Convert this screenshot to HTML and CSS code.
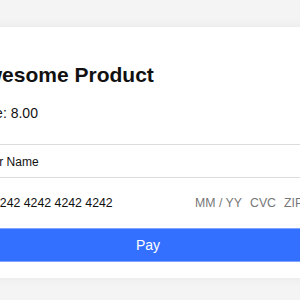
FILE: index.html
```html
<!DOCTYPE html>
<html lang="en">
<head>
    <meta charset="UTF-8">
    <meta name="viewport" content="width=device-width, initial-scale=1.0">
    <title>Checkout</title>
    <link rel="stylesheet" href="styles.css">
</head>
<body>
    <div class="page">
        <div class="card">
            <h2 class="title">Awesome Product</h2>
            <p class="price">Price: 8.00</p>
            <form class="pay-form">
                <div class="field name-field">
                    <span class="value">Your Name</span>
                </div>
                <div class="field card-field">
                    <svg class="brand" width="14" height="10" viewBox="0 0 14 10">
                        <rect x="0.5" y="0.5" width="13" height="9" rx="1.5" fill="none" stroke="#999"/>
                        <rect x="0.5" y="2.5" width="13" height="2" fill="#999"/>
                    </svg>
                    <span class="value number">4242 4242 4242 4242</span>
                    <span class="placeholder exp">MM / YY</span>
                    <span class="placeholder cvc">CVC</span>
                    <span class="placeholder zip">ZIP</span>
                </div>
                <button type="button" class="pay">Pay</button>
            </form>
        </div>
    </div>
</body>
</html>
```
FILE: styles.css
```css
html, body {
    margin: 0;
    height: 100%;
    overflow: hidden;
    background: #f4f4f4;
    font-family: "Liberation Sans", Arial, sans-serif;
    color: #111;
}
.page {
    display: flex;
    justify-content: center;
    padding: 27px 4px 0 0;
}
.card {
    flex: none;
    width: 354px;
    padding: 36px 20px 16px;
    background: white;
    box-shadow: 0 0 10px rgba(0, 0, 0, 0.06);
}
.title {
    margin: 0 0 18px;
    font-size: 21px;
    line-height: 24px;
    font-weight: bold;
}
.price {
    margin: 0 0 23px;
    font-size: 14px;
    line-height: 16px;
}
.field {
    display: flex;
    align-items: center;
    padding: 0 8px;
    font-size: 12px;
    line-height: 14px;
}
.name-field {
    padding-top: 10px;
    padding-bottom: 8px;
    border-top: 1px solid #dcdcdc;
    border-bottom: 1px solid #dcdcdc;
}
.card-field {
    padding-top: 18px;
    padding-bottom: 18px;
    font-size: 12.3px;
}
.brand {
    flex: none;
    margin-right: 0;
}
.number {
    flex: 1;
}
.placeholder {
    color: #777;
}
.exp {
    width: 55px;
}
.cvc {
    width: 34px;
}
.zip {
    width: 33px;
}
.pay {
    display: block;
    width: 100%;
    height: 34px;
    margin: 0;
    padding: 0;
    border: 1px solid #7ea5ff;
    border-left: none;
    border-right: none;
    background: #3370ff;
    color: white;
    font-family: inherit;
    font-size: 14px;
}
```
